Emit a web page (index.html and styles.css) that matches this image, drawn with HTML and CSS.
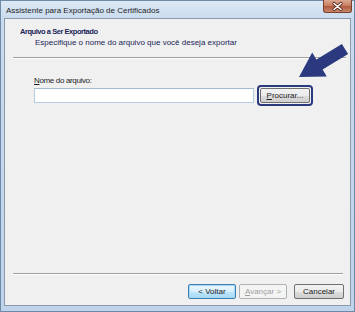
FILE: index.html
```html
<!DOCTYPE html>
<html lang="pt">
<head>
<meta charset="utf-8">
<title>Assistente para Exportação de Certificados</title>
<link rel="stylesheet" href="styles.css">
</head>
<body>
<div class="window">
  <div class="titlebar">
    <span class="title">Assistente para Exportação de Certificados</span>
    <div class="close">
      <svg width="29" height="13" viewBox="0 0 29 13"><path d="M11 3.5 L18 9.5 M18 3.5 L11 9.5" stroke="#5a2a1e" stroke-width="3.2" stroke-linecap="round"/><path d="M11 3.5 L18 9.5 M18 3.5 L11 9.5" stroke="#ffffff" stroke-width="1.6" stroke-linecap="round"/></svg>
    </div>
  </div>
  <div class="client">
    <div class="header">
      <div class="h-title">Arquivo a Ser Exportado</div>
      <div class="h-sub">Especifique o nome do arquivo que você deseja exportar</div>
    </div>
    <div class="sep sep-top"></div>
    <div class="body">
      <div class="field-label"><u>N</u>ome do arquivo:</div>
      <div class="field-row">
        <div class="input"></div>
        <div class="highlight"><button class="btn btn-browse"><u>P</u>rocurar...</button></div>
      </div>
    </div>
    <div class="sep sep-bottom"></div>
    <div class="footer">
      <button class="btn btn-default">&lt; Voltar</button>
      <button class="btn btn-disabled" disabled><u>A</u>vançar &gt;</button>
      <button class="btn btn-cancel">Cancelar</button>
    </div>
  </div>
  <svg class="arrow" width="355" height="312" viewBox="0 0 355 312"><polygon points="299,77 312.2,52.5 316.4,59.4 341.9,43.9 348.1,54.1 322.6,69.6 326.8,76.5" fill="#2b3a7f"/></svg>
</div>
</body>
</html>
```

FILE: styles.css
```css
* { box-sizing: border-box; }
html, body { margin: 0; padding: 0; }
body {
  width: 355px;
  height: 312px;
  overflow: hidden;
  font-family: "Liberation Sans", Arial, sans-serif;
  font-size: 8px;
  color: #1a1a1a;
}
.window {
  position: relative;
  width: 355px;
  height: 312px;
  display: flex;
  flex-direction: column;
  border: 1px solid #6f8aa8;
  background: linear-gradient(to bottom, #dce8f5 0px, #c9dbee 18px, #bfd3ea 100%);
  padding: 0 3px 5px 3px;
}
.titlebar {
  height: 17px;
  display: flex;
  align-items: flex-start;
  justify-content: space-between;
  flex: none;
}
.title {
  padding: 5px 0 0 2px;
  font-size: 8px;
  color: #1e1e1e;
  line-height: 10px;
}
.close {
  width: 29px;
  height: 13px;
  margin-top: -1px;
  margin-right: -1px;
  border: 1px solid #7a3f2e;
  border-top: none;
  border-radius: 0 0 3px 3px;
  background: linear-gradient(to bottom, #dba892 0%, #c98063 45%, #b05c40 55%, #c8896c 100%);
  display: flex;
  align-items: center;
  justify-content: center;
}
.close svg { display: block; margin: -1px; }
.client {
  flex: 1;
  display: flex;
  flex-direction: column;
  background: #f0f0f0;
  border: 1px solid #8c9aab;
}
.header {
  height: 38px;
  padding: 8px 0 0 15px;
  flex: none;
}
.h-title {
  font-weight: bold;
  font-size: 7.5px;
  letter-spacing: -0.45px;
  color: #1a2458;
  line-height: 10px;
}
.h-sub {
  color: #1a2458;
  padding-left: 15px;
  line-height: 10px;
  margin-top: 1px;
}
.sep {
  height: 2px;
  border-top: 1px solid #a0a0a0;
  border-bottom: 1px solid #ffffff;
  flex: none;
}
.sep-top { margin: 0 4px 0 8px; }
.sep-bottom { margin: 0 7px 0 8px; }
.body {
  flex: 1;
  padding: 17px 0 0 29px;
}
.field-label {
  line-height: 9px;
  color: #1e1e1e;
  letter-spacing: -0.35px;
}
.field-row {
  display: flex;
  align-items: center;
  margin-top: 0;
}
.input {
  width: 220px;
  height: 15px;
  background: #ffffff;
  border: 1px solid #b8cde2;
  border-top-color: #a3b9d0;
}
.highlight {
  margin-left: 3px;
  padding: 1px;
  border: 2px solid #2b3a7f;
  border-radius: 4px;
  background: #f0f0f0;
}
.btn {
  font-family: "Liberation Sans", Arial, sans-serif;
  font-size: 8px;
  color: #1a1a1a;
  height: 15px;
  padding: 0;
  border: 1px solid #707070;
  border-radius: 2px;
  background: linear-gradient(to bottom, #f2f2f2 0%, #ebebeb 50%, #dddddd 51%, #cfcfcf 100%);
  line-height: 13px;
  display: block;
}
.btn-browse { width: 50px; }
.footer {
  height: 30px;
  flex: none;
  display: flex;
  justify-content: flex-end;
  align-items: flex-start;
  padding: 9px 6px 0 0;
}
.footer .btn { width: 48px; }
.btn-default {
  border-color: #3c7fb1;
  box-shadow: inset 0 0 0 1px #a8d8f2;
  background: linear-gradient(to bottom, #eaf6fd 0%, #d9f0fc 50%, #bee6fd 51%, #a7d9f5 100%);
}
.btn-disabled {
  margin-left: 3px;
  border-color: #adb2b5;
  background: #f4f4f4;
  color: #a0a0a0;
}
.btn-cancel { margin-left: 7px; width: 50px !important; }
.arrow {
  position: absolute;
  left: -1px;
  top: -1px;
  pointer-events: none;
}
```
